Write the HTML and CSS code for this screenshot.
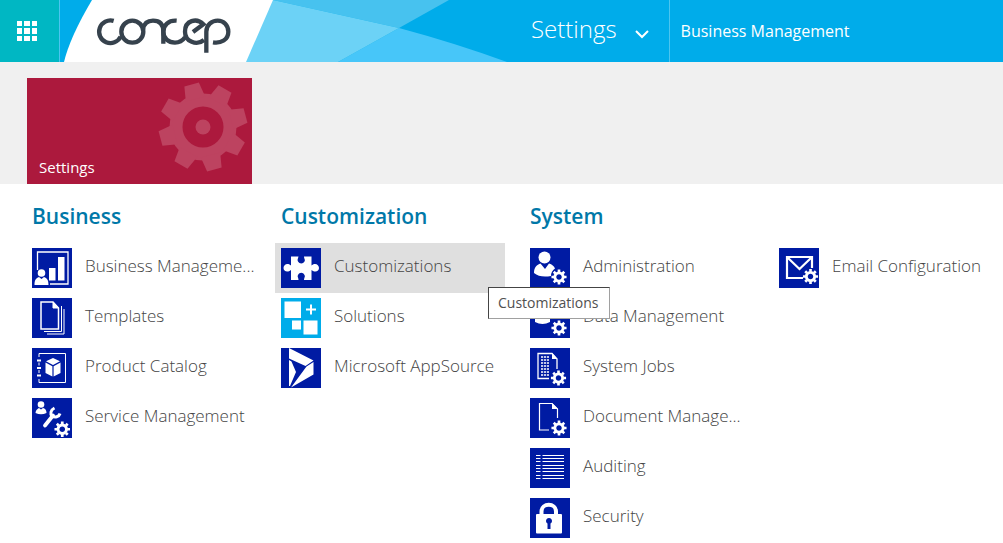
FILE: index.html
```html
<!DOCTYPE html>
<html lang="en">
<head>
<meta charset="utf-8">
<title>Settings - Business Management</title>
<link rel="stylesheet" href="styles.css">
</head>
<body>
<svg class="defs" aria-hidden="true">
  <symbol id="gear" viewBox="-9 -9 18 18">
    <circle r="4.4" fill="none" stroke="#fff" stroke-width="3"/>
    <g stroke="#fff" stroke-width="2.8"><path d="M0-8V-5M0 8V5M-8 0H-5M8 0H5M-5.6-5.6L-3.8-3.8M5.6 5.6L3.8 3.8M-5.6 5.6L-3.8 3.8M5.6-5.6L3.8-3.8"/></g>
  </symbol>
</svg>
<header class="topbar">
  <button class="apps" aria-label="Apps">
    <svg width="20" height="20" viewBox="0 0 20 20" fill="#fff"><path d="M0 0h5v5H0zM7 0h6v5H7zM15 0h5v5h-5zM0 7h5v6H0zM7 7h6v6H7zM15 7h5v6h-5zM0 15h5v5H0zM7 15h6v5H7zM15 15h5v5h-5z"/></svg>
  </button>
  <svg class="brand" viewBox="60 0 448 62" width="448" height="62" role="img" aria-label="concep">
    <path fill="#47c2ef" d="M273 0H449L399 28Z"/>
    <path fill="#47c6f9" d="M338 62H507Q455 43 399 28Z"/>
    <path fill="#6cd2f6" d="M273 0L399 28L338 62H240V0Z"/>
    <path fill="#fff" d="M92 0H273L246 62H64Q70 37 92 0Z"/>
    <g transform="scale(.33333)" fill="none" stroke="#36424d" stroke-width="13">
      <path d="M341 62.500A34 34 0 1 0 362 110"/>
      <circle cx="397" cy="95" r="33"/>
      <path d="M429 88C432 70 444 62 459 62C480 62 490 74 490 95V131"/>
      <path d="M530 62C505 60 490 76 490 95C490 115 505 128 525 128C538 128 548 122 555 112"/>
      <path d="M579 96L610 73C590 52 555 61 555 95C555 125 590 138 612 120"/>
      <path d="M619 158V95C619 75 635 62 653 62C671 62 685 76 685 95C685 119 663 131 639 127"/>
    </g>
  </svg>
  <button class="area">Settings
    <svg width="14" height="9" viewBox="0 0 14 9" fill="none" stroke="#fff" stroke-width="2"><path d="M1 1L7 7L13 1"/></svg>
  </button>
  <a class="crumb" href="#">Business Management</a>
</header>

<nav class="band">
  <a class="tile" href="#">
    <svg class="cog" width="90" height="90" viewBox="-45 -45 90 90">
      <circle r="27" fill="none" stroke="#bd4360" stroke-width="13"/>
      <circle r="7.500" fill="#bd4360"/>
      <g fill="#bd4360" transform="rotate(-15)">
        <path id="tooth" d="M-10-29L-7.500-44H7.500L10-29Z"/>
        <use href="#tooth" transform="rotate(45)"/><use href="#tooth" transform="rotate(90)"/><use href="#tooth" transform="rotate(135)"/><use href="#tooth" transform="rotate(180)"/><use href="#tooth" transform="rotate(225)"/><use href="#tooth" transform="rotate(270)"/><use href="#tooth" transform="rotate(315)"/>
      </g>
    </svg>
    <span>Settings</span>
  </a>
</nav>

<main class="groups">
  <section class="group">
    <h2>Business</h2>
    <ul>
      <li><a class="item" href="#">
        <svg class="icon" viewBox="0 0 40 40"><path d="M5.500 22V4H36V36H18" fill="none" stroke="#fff" stroke-width="1.300"/><path fill="#fff" d="M17 20h6.500v12.500H17zM26 9h6.500v23.500H26zM2.500 37C2.500 32 4 30 7 29L9.500 31L12 29C15 30 16.500 32 16.500 37Z"/><circle cx="9.500" cy="25" r="3.800" fill="#fff"/></svg>
        <span>Business Manageme...</span></a></li>
      <li><a class="item" href="#">
        <svg class="icon" viewBox="0 0 40 40" fill="none" stroke="#fff"><path stroke-width="1.500" d="M21 4H9V31H26.500V10Z"/><path d="M21 4V10H26.500Z" fill="#fff"/><path d="M29.500 8V33.500H12M32 11V36H15"/></svg>
        <span>Templates</span></a></li>
      <li><a class="item" href="#">
        <svg class="icon" viewBox="0 0 40 40"><path fill="none" stroke="#fff" d="M7 9V5.500H33.500V34.500H7V31M7 14.500V17.500M7 22V25"/><path stroke="#fff" stroke-width="1.800" d="M5 12.500H9M5 20H9M5 27.500H9"/><path fill="#fff" d="M21 10L28 13.200L21 17L14 13.200ZM13.500 14.500L20.400 18.200V28.500L13.500 25ZM28.500 14.500L21.600 18.200V28.500L28.500 25Z"/></svg>
        <span>Product Catalog</span></a></li>
      <li><a class="item" href="#">
        <svg class="icon" viewBox="0 0 40 40"><circle cx="9" cy="6.500" r="3.300" fill="#fff"/><path fill="#fff" d="M3.500 15C4 11.500 6 10.500 7 10L9 11.500L11 10C13 10.500 14.500 12 14.500 15Q9 17.500 3.500 15Z"/><path fill="none" stroke="#fff" stroke-width="3.800" stroke-linecap="round" d="M13 27.500L21 17.500"/><path fill="none" stroke="#fff" stroke-width="3" d="M22.500 10C18.500 12 18 16 20 18C23 20 27 19 28 15.500"/><use href="#gear" x="21.500" y="22.500" width="17.500" height="17.500"/></svg>
        <span>Service Management</span></a></li>
    </ul>
  </section>
  <section class="group">
    <h2>Customization</h2>
    <ul>
      <li class="hovered"><a class="item active" href="#" aria-describedby="tip">
        <svg class="icon" viewBox="0 0 40 40"><path fill="#fff" d="M10 8.500H17.500C17 11 16 11.500 17 13.500C18.500 16 22 16 23.500 13.500C24.500 11.500 23 11 23 8.500H30.500V17.500L32 16.500C35 15 38 17 38 20C38 23 35 24.500 32 23L30.500 22V32H23C23 29.500 24.500 29 23.500 27C22 24 18.500 24 17 27C16 29 17.500 29.500 17.500 32H10V22L8.500 23C5.500 24.500 2.500 23 2.500 20C2.500 17 5.500 15 8.500 16.500L10 17.500Z"/></svg>
        <span>Customizations</span></a>
        <div class="tooltip" id="tip" role="tooltip">Customizations</div></li>
      <li><a class="item" href="#">
        <svg class="icon bright" viewBox="0 0 40 40"><path fill="#fff" d="M3.500 3.500H20V20H3.500zM11 22.500H20V31.500H11zM22.500 22.500H36.500V36.500H22.500z"/><path stroke="#fff" stroke-width="2" d="M25 11.500H35M30 6.500V16.500"/></svg>
        <span>Solutions</span></a></li>
      <li><a class="item" href="#">
        <svg class="icon" viewBox="0 0 40 40"><path fill="#fff" d="M8 0L32.500 12.500L24.500 18L8 10.500ZM32.500 14V26.500L10 39.500L25.500 18.500ZM8 12L10.500 13.500L15 24L9 38H8Z"/></svg>
        <span>Microsoft AppSource</span></a></li>
    </ul>
  </section>
  <section class="group wide">
    <h2>System</h2>
    <ul>
      <li><a class="item" href="#">
        <svg class="icon" viewBox="0 0 40 40"><circle cx="14.500" cy="9.500" r="6" fill="#fff"/><path fill="#fff" d="M4 25C4 19 7 17 10.500 15.500L15 21L19 15.500C22 16.500 24 18 25 20.500Q21 23 21 28Q10 30 4 25Z"/><use href="#gear" x="20.500" y="20.500" width="17" height="17"/></svg>
        <span>Administration</span></a></li>
      <li><a class="item" href="#">
        <svg class="icon" viewBox="0 0 40 40"><path fill="#fff" d="M5 6H20V24Q12.500 28 5 24Z"/><use href="#gear" x="20.500" y="21.500" width="17" height="17"/></svg>
        <span>Data Management</span></a></li>
      <li><a class="item" href="#">
        <svg class="icon" viewBox="0 0 40 40"><path fill="none" stroke="#fff" stroke-width="1.300" d="M19 30.500H8V5.500H22L27 11V21"/><path fill="#fff" d="M22 5V11H27.500Z"/><path stroke="#fff" stroke-width="1.500" d="M11 9H19M11 12H19M11 15H19M11 18H19M11 21H19M11 24H19M11 27H19" stroke-dasharray="2.200 .8"/><use href="#gear" x="20" y="21.500" width="17" height="17"/></svg>
        <span>System Jobs</span></a></li>
      <li><a class="item" href="#">
        <svg class="icon" viewBox="0 0 40 40"><path fill="none" stroke="#fff" stroke-width="1.200" d="M19 32H9.500V5.500H22L27.500 11V20"/><path fill="#fff" d="M22 5V11H28Z"/><use href="#gear" x="20.500" y="21.500" width="17" height="17"/></svg>
        <span>Document Manage...</span></a></li>
      <li><a class="item" href="#">
        <svg class="icon" viewBox="0 0 40 40"><path stroke="#fff" d="M6 7.500H10.500M12.500 7.500H34M6 10.500H10.500M12.500 10.500H34M6 13.500H10.500M12.500 13.500H34M6 17.500H10.500M12.500 17.500H34M6 20.500H10.500M12.500 20.500H34M6 23.500H10.500M12.500 23.500H34M6 27.500H10.500M12.500 27.500H34M6 30.500H10.500M12.500 30.500H34"/></svg>
        <span>Auditing</span></a></li>
      <li><a class="item" href="#">
        <svg class="icon" viewBox="0 0 40 40"><path fill="none" stroke="#fff" stroke-width="4" d="M11.500 18V13.500C11.500 4.500 26 4.500 26 13.500V18"/><rect x="6" y="16" width="26" height="19.500" rx="1" fill="#fff"/><path fill="#001ba3" d="M17.500 31V25.500A3 3 0 1 1 20.500 25.500V31Z"/></svg>
        <span>Security</span></a></li>
      <li><a class="item" href="#">
        <svg class="icon" viewBox="0 0 40 40"><path fill="none" stroke="#fff" stroke-width="2.200" d="M24 30H8V9H33V20M8 9L20.500 21L33 9"/><use href="#gear" x="23" y="20" width="17" height="17"/></svg>
        <span>Email Configuration</span></a></li>
    </ul>
  </section>
</main>
</body>
</html>
```
FILE: styles.css
```css
* { box-sizing: border-box; }
body {
  margin: 0;
  background: #fff;
  color: #444;
  font-family: "Open Sans", "Noto Sans", sans-serif;
}
a { color: inherit; text-decoration: none; }
button { border: 0; padding: 0; font: inherit; color: inherit; background: none; }
.defs { position: absolute; width: 0; height: 0; }

.topbar {
  display: flex;
  height: 62px;
  background: #00acea;
  color: #fff;
}
.apps {
  display: flex;
  align-items: center;
  justify-content: center;
  flex: none;
  width: 60px;
  padding-right: 6px;
  background: #00b7c3;
  border-right: 1px solid #4cc5f0;
}
.brand { flex: none; }
.area {
  display: flex;
  align-items: center;
  gap: 18px;
  padding: 0 20px 6px 23px;
  border-right: 1px solid #4cc5f0;
  font-size: 24px;
  font-weight: 300;
}
.area svg { margin-top: 12px; }
.crumb {
  display: flex;
  align-items: center;
  padding-left: 11px;
  font-size: 16px;
  white-space: nowrap;
}

.band {
  padding: 16px 27px 0;
  background: #f0f0f0;
}
.tile {
  position: relative;
  display: flex;
  align-items: flex-end;
  width: 225px;
  height: 106px;
  padding: 0 12px 6px;
  background: #ac193d;
  color: #fff;
  font-size: 15px;
  line-height: 22px;
}
.cog { position: absolute; top: 4px; right: 4px; }

.groups {
  display: grid;
  grid-template-columns: repeat(4, minmax(0, 1fr));
  column-gap: 19px;
  padding-left: 26px;
}
.wide { grid-column: span 2; }
.group h2 {
  margin: 0;
  padding: 16px 6px 11px;
  color: #0078a8;
  font-size: 21px;
  font-weight: 600;
  line-height: 32px;
}
.group ul {
  display: grid;
  margin: 0;
  padding: 0;
  list-style: none;
}
.wide ul {
  grid-template-rows: repeat(6, auto);
  grid-template-columns: repeat(2, minmax(0, 1fr));
  grid-auto-flow: column;
  column-gap: 19px;
}
.item {
  display: flex;
  align-items: center;
  gap: 13px;
  height: 50px;
  padding: 0 0 0 6px;
  font-size: 17px;
  font-weight: 350;
  white-space: nowrap;
}
.item span { padding-bottom: 5px; }
.active { background: #dfdfdf; }
.icon {
  flex: none;
  width: 40px;
  height: 40px;
  background: #001ba3;
}
.bright { background: #00acea; }
.hovered { position: relative; }
.tooltip {
  position: absolute;
  z-index: 1;
  top: 44px;
  left: 213px;
  padding: 5px 10px 5px 9px;
  border: 1px solid #a0a0a0;
  border-top-color: #444;
  border-left-color: #444;
  background: #fff;
  color: #505050;
  font-size: 14px;
  line-height: 20px;
}
```
